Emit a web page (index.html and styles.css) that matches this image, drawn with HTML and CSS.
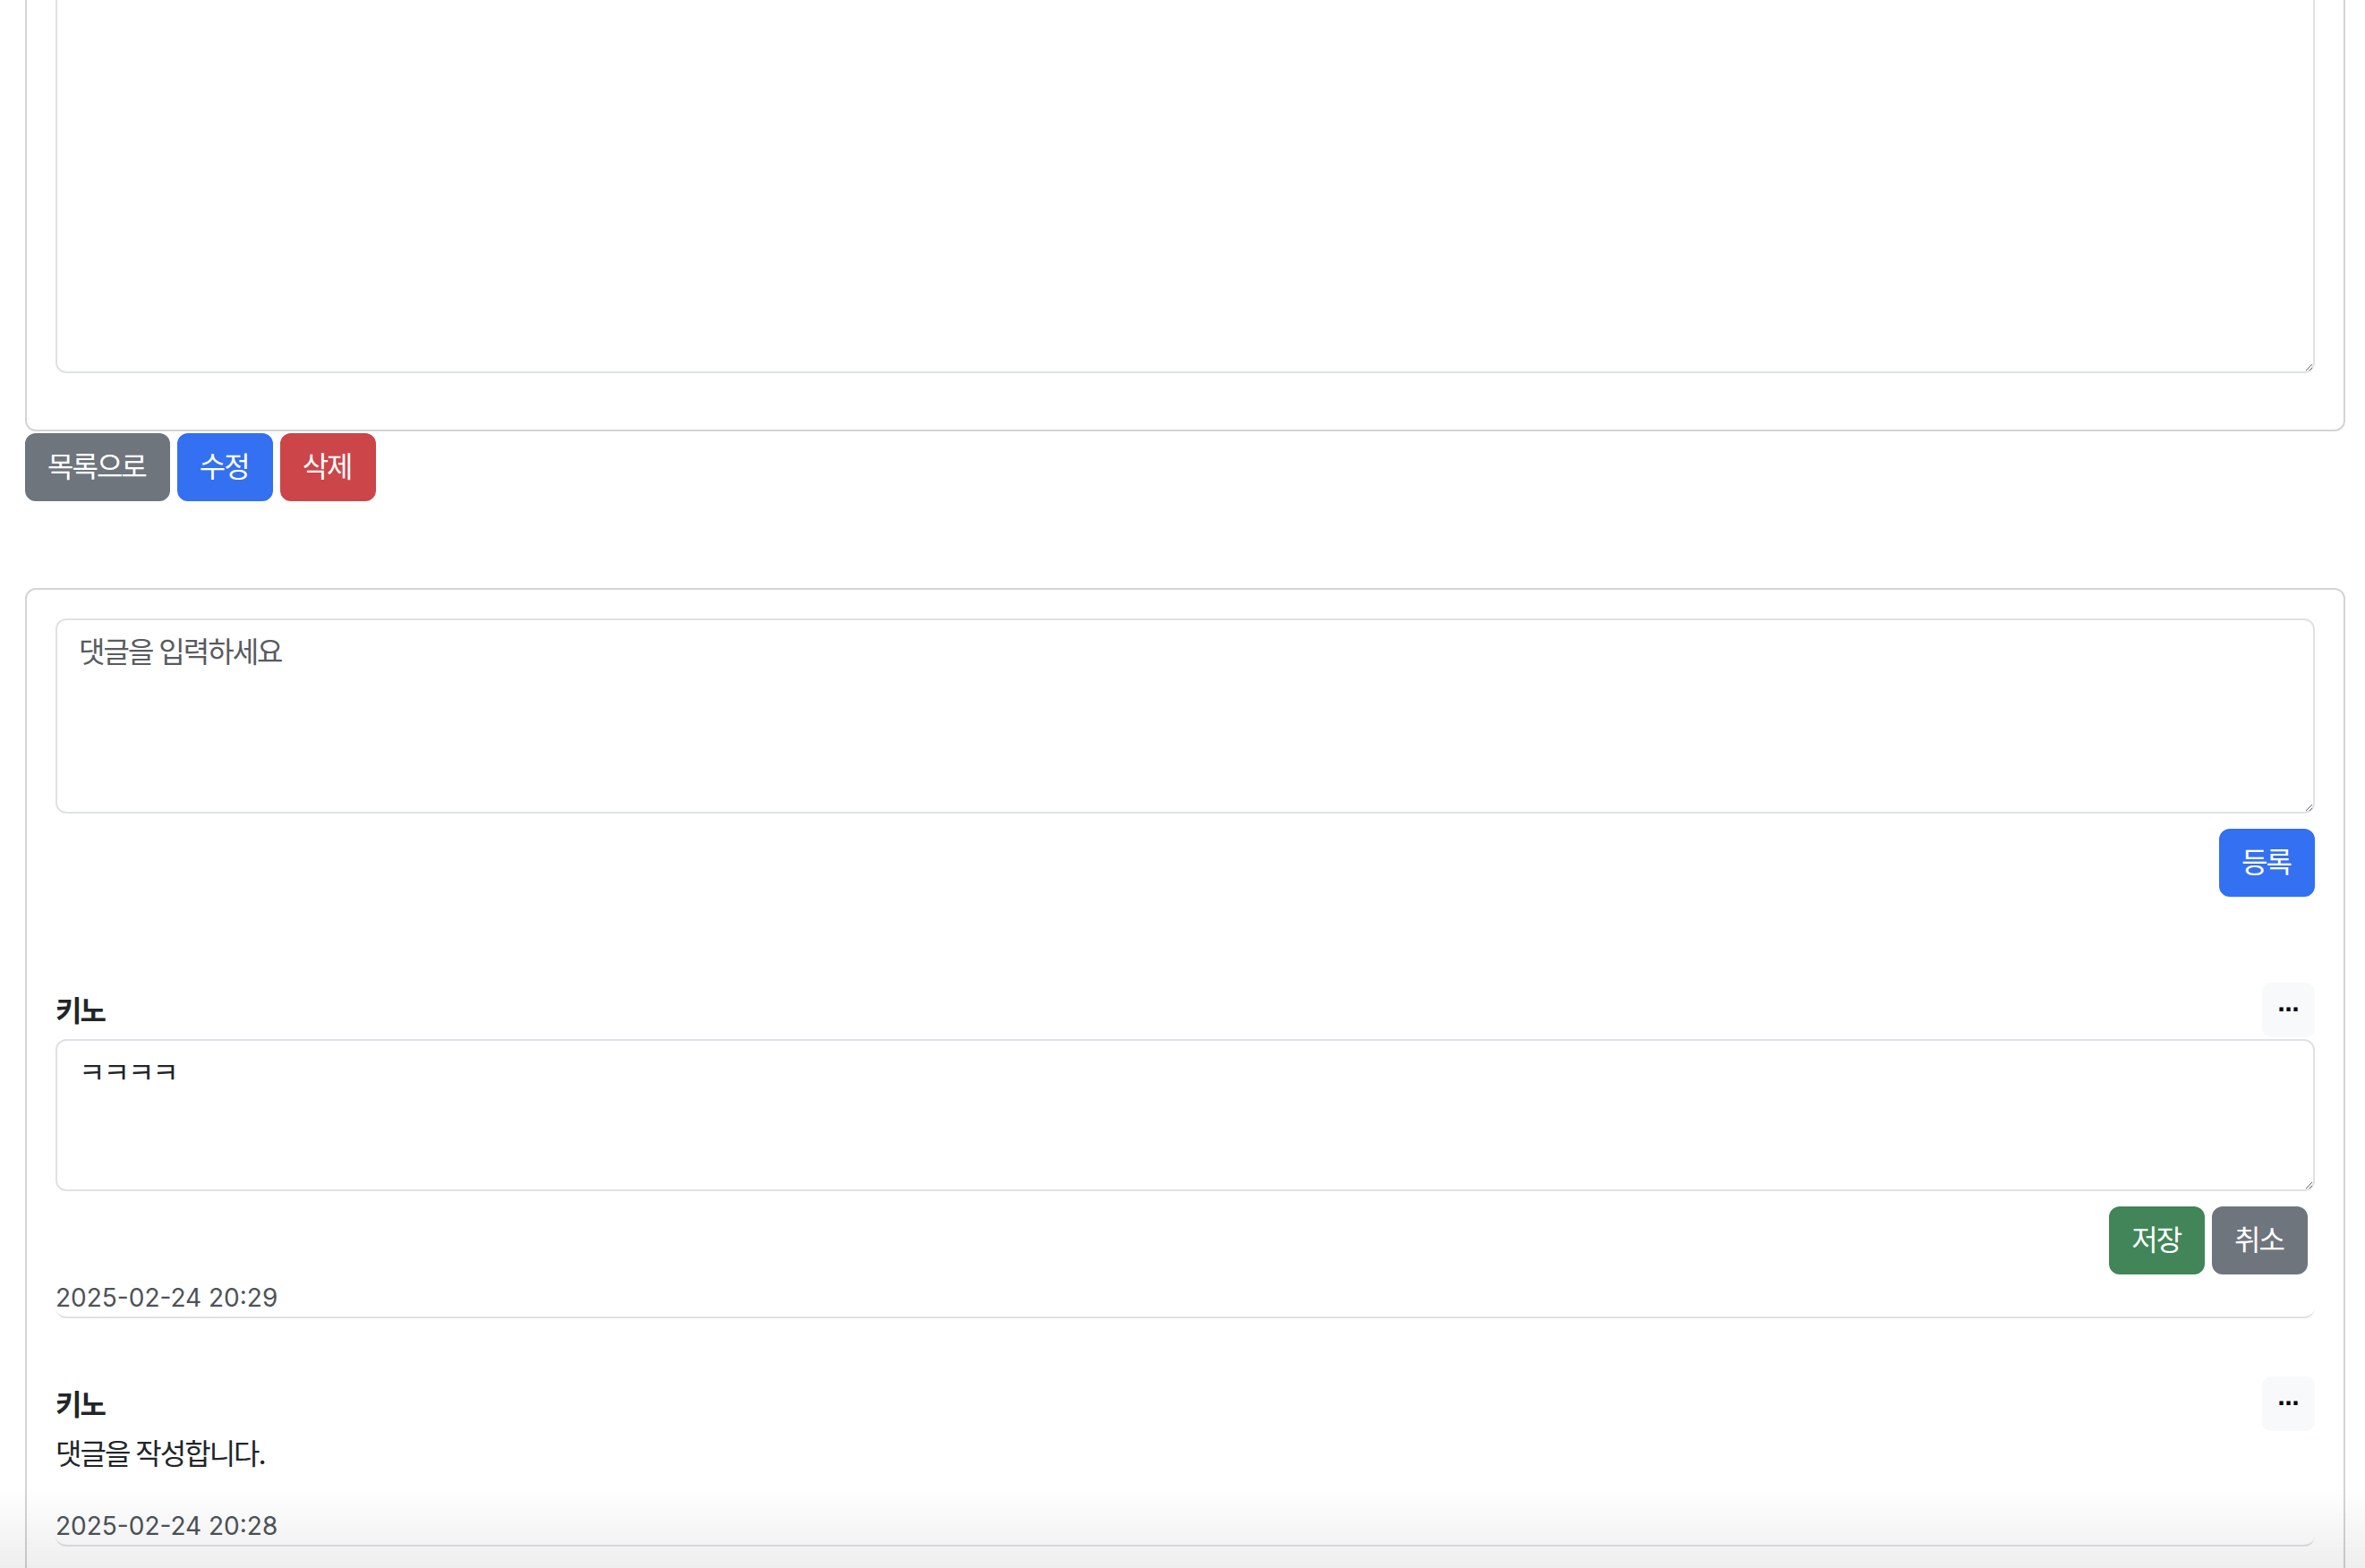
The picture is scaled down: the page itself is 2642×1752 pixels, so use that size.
FILE: index.html
```html
<!DOCTYPE html>
<html lang="ko">
<head>
<meta charset="utf-8">
<title>게시글</title>
<link rel="stylesheet" href="styles.css">
</head>
<body>
<div class="page">
  <section class="card post-card">
    <textarea class="form-control post-body" aria-label="내용"></textarea>
  </section>
  <div class="post-actions">
    <button class="btn btn-gray">목록으로</button>
    <button class="btn btn-blue">수정</button>
    <button class="btn btn-red">삭제</button>
  </div>

  <section class="card comment-card">
    <textarea class="form-control comment-input" placeholder="댓글을 입력하세요"></textarea>
    <div class="submit-row"><button class="btn btn-blue">등록</button></div>

    <ul class="comments">
      <li class="comment">
        <div class="comment-head">
          <strong class="comment-author">키노</strong>
          <button class="btn-more">⋯</button>
        </div>
        <textarea class="form-control edit-input">ㅋㅋㅋㅋ</textarea>
        <div class="edit-actions">
          <button class="btn btn-green">저장</button>
          <button class="btn btn-gray">취소</button>
        </div>
        <div class="comment-date">2025-02-24 20:29</div>
      </li>
      <li class="comment">
        <div class="comment-head">
          <strong class="comment-author">키노</strong>
          <button class="btn-more">⋯</button>
        </div>
        <p class="comment-text">댓글을 작성합니다.</p>
        <div class="comment-date">2025-02-24 20:28</div>
      </li>
    </ul>
  </section>
</div>
<div class="screen-fade"></div>
</body>
</html>
```
FILE: styles.css
```css
html, body {
  margin: 0;
  padding: 0;
  overflow: hidden;
  background: #ffffff;
}
body {
  font-family: Inter, "Noto Sans CJK KR", sans-serif;
  font-size: 32px;
  line-height: 48px;
  color: #212529;
}
.page {
  margin: 0 22px 0 28px;
}
.card {
  border: 2px solid #d3d4d5;
  border-radius: 12px;
  padding: 32px;
  background: #fff;
}
.post-card {
  margin-top: -200px;
}
.form-control {
  display: block;
  width: 100%;
  box-sizing: border-box;
  border: 2px solid #dee2e6;
  border-radius: 12px;
  padding: 12px 24px;
  font-family: Inter, "Noto Sans CJK KR", sans-serif;
  font-size: 32px;
  line-height: 48px;
  letter-spacing: -2px;
  color: #212529;
  background: #fff;
  resize: vertical;
  outline: none;
  margin: 0;
}
.form-control::placeholder {
  color: #585b5f;
  opacity: 1;
}
.post-body {
  height: 583px;
  margin-bottom: 31px;
}
.post-actions {
  display: flex;
  gap: 8px;
  margin-top: 2px;
}
.btn {
  font-family: Inter, "Noto Sans CJK KR", sans-serif;
  font-size: 32px;
  line-height: 48px;
  letter-spacing: -2px;
  padding: 12px 25px 12px 23px;
  border: 2px solid transparent;
  border-radius: 12px;
  color: #fff;
  cursor: pointer;
}
.btn-gray { background: #6e757d; border-color: #6e757d; }
.btn-blue { background: #3370f2; border-color: #3370f2; }
.btn-red { background: #cb4549; border-color: #cb4549; }
.btn-green { background: #418558; border-color: #418558; }

.comment-card {
  margin-top: 97px;
  padding-bottom: 400px;
}
.comment-input {
  height: 218px;
}
.submit-row {
  display: flex;
  justify-content: flex-end;
  margin-top: 17px;
}
.comments {
  list-style: none;
  margin: 96px 0 0;
  padding: 0;
}
.comment {
  border-bottom: 2px solid #dee2e6;
  border-radius: 12px;
  margin-bottom: 65px;
}
.comment-head {
  display: flex;
  justify-content: space-between;
  align-items: center;
  margin-bottom: 2px;
}
.comment-author {
  font-weight: 700;
  letter-spacing: -2px;
  margin-top: 2px;
}
.btn-more {
  font-family: "DejaVu Sans", sans-serif;
  font-size: 24px;
  line-height: 41px;
  font-weight: 700;
  width: 59px;
  height: 61px;
  padding: 0;
  border: 2px solid #f8f9fa;
  border-radius: 10px;
  background: #f8f9fa;
  color: #000;
}
.edit-input {
  height: 170px;
}
.edit-actions {
  display: flex;
  justify-content: flex-end;
  margin-top: 17px;
}
.edit-actions .btn {
  margin-right: 8px;
}
.comment-text {
  margin: 0 0 35px;
  letter-spacing: -2px;
}
.comment-date {
  font-size: 28px;
  line-height: 42px;
  color: #4d5359;
  margin-top: 5px;
}
.comment-text + .comment-date {
  margin-top: 0;
}
.screen-fade {
  position: fixed;
  left: 0;
  right: 0;
  bottom: 0;
  height: 90px;
  background: linear-gradient(to bottom, rgba(0,0,0,0), rgba(0,0,0,0.065));
  pointer-events: none;
}
```
